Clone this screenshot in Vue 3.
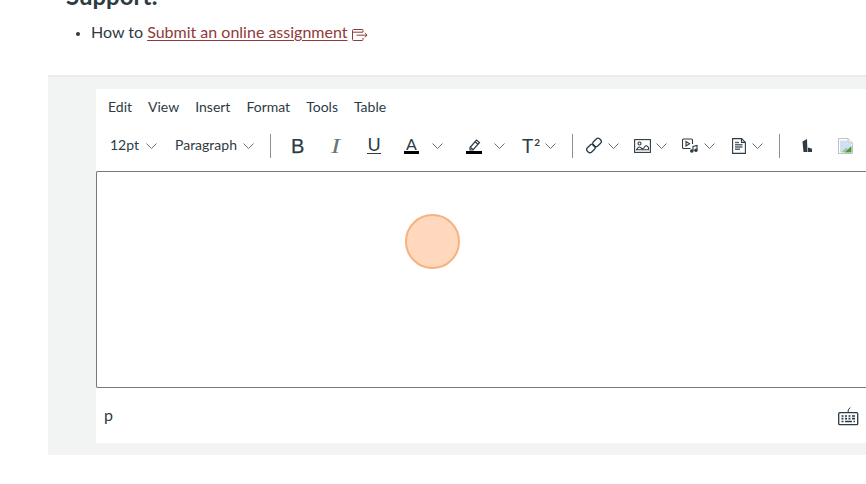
<script setup>
const menus = ['Edit', 'View', 'Insert', 'Format', 'Tools', 'Table']
</script>

<template>
  <div class="page">
    <h3 class="heading">Support:</h3>
    <ul class="list">
      <li>How to <a class="link">Submit an online assignment</a>
        <svg class="ext" viewBox="0 0 16 12" width="16" height="12" fill="none" stroke="#8f3a3a" stroke-width="1">
          <path d="M11 3V1.500a1 1 0 0 0-1-1H1.500a1 1 0 0 0-1 1v9a1 1 0 0 0 1 1H10a1 1 0 0 0 1-1V9" />
          <path d="M.5 3.200h10.500M4.500 6.200H15M12.800 4l2.300 2.200-2.300 2.200" />
        </svg>
      </li>
    </ul>
    <section class="panel">
      <div class="editor">
        <nav class="menubar">
          <span v-for="m in menus" :key="m">{{ m }}</span>
        </nav>
        <div class="toolbar">
          <span class="txt first">12pt</span>
          <svg class="chev ml6" viewBox="0 0 11 6"><path d="M.5.500l5 5 5-5" /></svg>
          <span class="txt para">Paragraph</span>
          <svg class="chev ml6" viewBox="0 0 11 6"><path d="M.5.500l5 5 5-5" /></svg>
          <i class="sep ml16"></i>
          <span class="b">B</span>
          <span class="it">I</span>
          <span class="u">U</span>
          <span class="a">A</span>
          <svg class="chev ml13" viewBox="0 0 11 6"><path d="M.5.500l5 5 5-5" /></svg>
          <svg class="pen" viewBox="0 0 16 16" width="16" height="16" fill="none" stroke="#2d3b45" stroke-width="1.200">
            <path d="M4 9.500l6.500-7.500 3 2.500-6.500 7.500H4z" />
            <path d="M9 3.800l3 2.500M4.500 9.500l2.500 2" />
            <rect x="0" y="13" width="16" height="3" fill="#000" stroke="none" />
          </svg>
          <svg class="chev ml12" viewBox="0 0 11 6"><path d="M.5.500l5 5 5-5" /></svg>
          <span class="sup">T<small>2</small></span>
          <svg class="chev ml5" viewBox="0 0 11 6"><path d="M.5.500l5 5 5-5" /></svg>
          <i class="sep ml16"></i>
          <svg class="linki" viewBox="0 0 16 17" width="16" height="17" fill="none" stroke="#2d3b45" stroke-width="1.300">
            <rect x="6.500" y="2.500" width="9" height="6" rx="2.500" transform="rotate(-45 11 5.500)" />
            <rect x="0.500" y="8.500" width="9" height="6" rx="2.500" transform="rotate(-45 5 11.500)" />
            <path d="M6.500 7.500l3 3" />
          </svg>
          <svg class="chev ml6" viewBox="0 0 11 6"><path d="M.5.500l5 5 5-5" /></svg>
          <svg class="imgi" viewBox="0 0 17 14" width="17" height="14" fill="none" stroke="#2d3b45" stroke-width="1.100">
            <rect x="0.600" y="0.600" width="15.800" height="12.800" />
            <circle cx="5.500" cy="4.500" r="1.500" />
            <path d="M2.500 10.800c1.500-3 3-3.300 4.500-2s2.500 1 3.500-.8 2.500-1.500 4 .5v2.300z" />
          </svg>
          <svg class="chev ml5" viewBox="0 0 11 6"><path d="M.5.500l5 5 5-5" /></svg>
          <svg class="medi" viewBox="0 0 16 16" width="16" height="16" fill="none" stroke="#2d3b45" stroke-width="1.100">
            <path d="M8.500 10.500H1.500a1 1 0 0 1-1-1V2a1 1 0 0 1 1-1h8a1 1 0 0 1 1 1v4" />
            <path d="M4 3.500l3.500 2.300L4 8z" />
            <path d="M11 13V8.500l4-1V12" />
            <circle cx="9.800" cy="13" r="1.200" fill="#2d3b45" />
            <circle cx="13.900" cy="12.200" r="1.200" fill="#2d3b45" />
          </svg>
          <svg class="chev ml6" viewBox="0 0 11 6"><path d="M.5.500l5 5 5-5" /></svg>
          <svg class="doc" viewBox="0 0 14 16" width="14" height="16" fill="none" stroke="#2d3b45" stroke-width="1.100">
            <path d="M.6.600h9l3.800 3.800v11H.6z" />
            <path d="M9.500.600v3.800h3.900" />
            <path d="M3 4.500h4M3 6.800h7.500M3 9h7.500M3 11.300h5" stroke="#5b666e" stroke-width="1.400" />
          </svg>
          <svg class="chev ml6" viewBox="0 0 11 6"><path d="M.5.500l5 5 5-5" /></svg>
          <i class="sep ml16"></i>
          <svg class="lti" viewBox="0 0 10 13" width="10" height="13" fill="#2d3b45">
            <path d="M.5 2.500L5 0l.5 13H1.500z" />
            <path d="M6 8.500l4 1.200V13H6z" />
          </svg>
          <svg class="broken" viewBox="0 0 15 16" width="15" height="16">
            <path d="M.5.500h9.500l4.500 4.500v10.500H.5z" fill="#fff" stroke="#bcc1c5" />
            <path d="M2 2.500h7.500V6H13v3.500L7 14H2z" fill="#cfe0f2" />
            <path d="M10 .500V5h4.500" fill="#e9ecee" stroke="#bcc1c5" />
            <path d="M3 14.500l5-4.500 2 1-3.500 3.500z" fill="#9ec78f" />
            <path d="M6.500 14.500l7-6.500v6.500z" fill="#4c9a3f" />
          </svg>
        </div>
        <div class="area"></div>
        <div class="status">
          <span class="path">p</span>
          <svg class="kbd" viewBox="0 0 21 20" width="21" height="20" fill="none" stroke="#2d3b45">
            <rect x="0.700" y="6.700" width="19" height="12" rx="1" stroke-width="1.300" />
            <path d="M10.200 6.500V4l2-2.500" stroke-width="1" />
            <path d="M3.500 10h2M7 10h2M10.500 10h2M14 10h3M3.500 12.600h2M7 12.600h2M10.500 12.600h2M14 12.600h3M3.500 15.500h2M7 15.500h7M15.500 15.500h1.500" stroke-width="1.600" />
          </svg>
        </div>
      </div>
    </section>
    <div class="pulse"></div>
  </div>
</template>

<style>
html, body { margin: 0; background: #fff; }
</style>

<style scoped>
.page {
  position: relative;
  width: 866px;
  height: 484px;
  overflow: hidden;
  background: #fff;
  color: #2d3b45;
  font-family: Lato, "Liberation Sans", sans-serif;
  font-size: 16px;
}
.heading {
  margin: -16px 0 0 66px;
  height: 24px;
  font-size: 24px;
  line-height: 24px;
  font-weight: 700;
}
.list {
  margin: 12px 0 0;
  padding: 0 0 0 91px;
  height: 24px;
  line-height: 24px;
}
.list li::marker { font-size: 12px; }
.link {
  color: #8f3a3a;
  text-decoration: underline;
  text-underline-offset: 2px;
}
.ext { margin-left: 5px; vertical-align: -3px; }
.panel {
  margin: 31px 0 0 48px;
  height: 380px;
  box-sizing: border-box;
  padding: 12px 0 12px 48px;
  background: #f2f4f4;
  border-top: 2px solid #e9ecec;
}
.editor {
  width: 770px;
  height: 354px;
  background: #fff;
  display: flex;
  flex-direction: column;
}
.menubar {
  height: 36px;
  display: flex;
  align-items: center;
  gap: 16px;
  padding: 0 0 0 12px;
  font-size: 14px;
  line-height: 36px;
  flex: none;
}
.toolbar {
  height: 46px;
  box-sizing: border-box;
  padding-bottom: 5px;
  display: flex;
  align-items: center;
  font-size: 14px;
  white-space: nowrap;
  overflow: hidden;
  flex: none;
}
.toolbar > * { flex: none; }
.txt { margin-bottom: 2px; }
.txt.first { margin-left: 14px; width: 30px; }
.para { margin-left: 18px; width: 62px; }
.chev {
  width: 11px;
  height: 6px;
  fill: none;
  stroke: #56636d;
  stroke-width: 0.9;
}
.ml5 { margin-left: 5px; }
.ml6 { margin-left: 6px; }
.ml12 { margin-left: 12px; }
.ml13 { margin-left: 13px; }
.ml16 { margin-left: 16px; }
.sep {
  display: block;
  width: 1px;
  height: 24px;
  background: #8a9298;
}
.b {
  margin-left: 20px;
  width: 13px;
  font-family: "Liberation Sans", sans-serif;
  font-size: 20px;
  line-height: 20px;
  -webkit-text-stroke: 0.25px #2d3b45;
}
.it {
  margin-left: 26px;
  width: 11px;
  text-align: center;
  font-family: "Liberation Serif", serif;
  font-style: italic;
  font-size: 21px;
  line-height: 20px;
  color: #6b757c;
  transform: scaleX(1.3);
}
.u {
  margin-left: 26px;
  width: 14px;
  box-sizing: content-box;
  text-align: center;
  font-size: 18px;
  line-height: 14px;
  height: 14px;
  padding-bottom: 2px;
  border-bottom: 1px solid #2d3b45;
}
.a {
  margin-left: 23px;
  width: 15px;
  text-align: center;
  font-size: 16px;
  line-height: 12px;
  height: 13px;
  border-bottom: 3px solid #000;
}
.pen { margin-left: 23px; }
.sup {
  margin-left: 17px;
  width: 18px;
  font-size: 19px;
  line-height: 20px;
}
.sup small {
  font-size: 10px;
  vertical-align: 7px;
  margin-left: 1px;
  font-weight: 700;
  line-height: 0;
}
.linki { margin-left: 13px; }
.imgi { margin-left: 15px; }
.medi { margin-left: 15px; }
.doc { margin-left: 17px; }
.lti { margin-left: 22px; }
.broken { margin-left: 26px; }
.area {
  height: 217px;
  box-sizing: border-box;
  border: 1px solid #73797e;
  border-right: 0;
  border-radius: 2px 0 0 2px;
  background: #fff;
  flex: none;
}
.status {
  flex: 1;
  display: flex;
  align-items: center;
  justify-content: space-between;
  padding: 0 7px 0 8px;
  width: 755px;
}
.path { font-size: 16px; margin-bottom: 2px; }
.pulse {
  position: absolute;
  left: 405px;
  top: 214px;
  width: 55px;
  height: 55px;
  box-sizing: border-box;
  border-radius: 50%;
  background: #ffd8bd;
  border: 2px solid #f6b27f;
}
</style>
